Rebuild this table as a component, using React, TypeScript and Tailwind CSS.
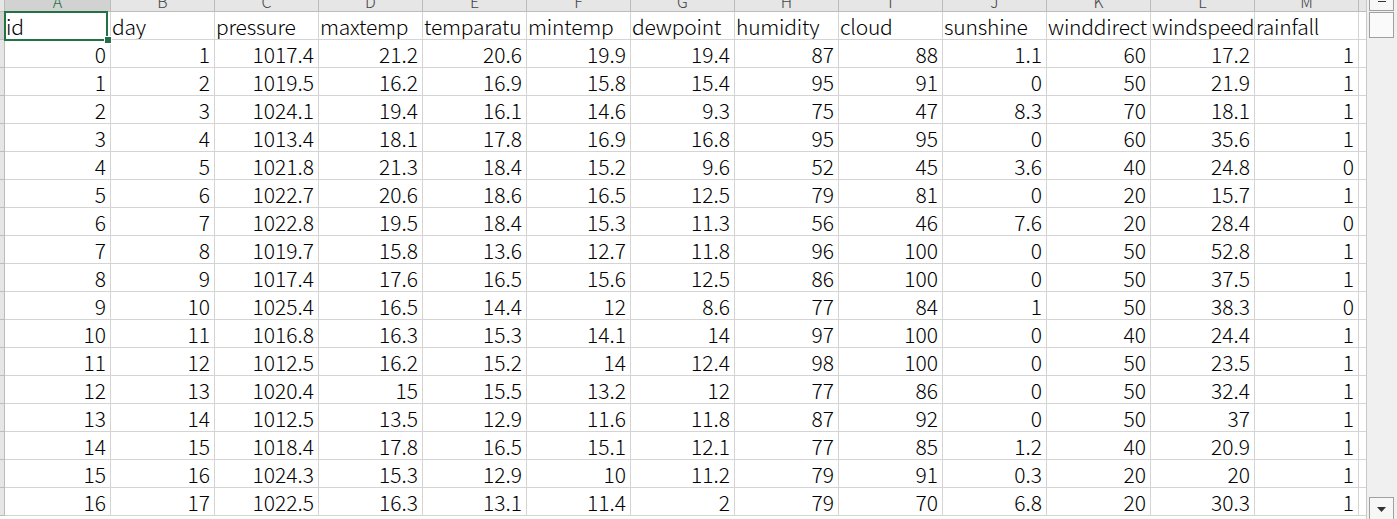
import React from "react";

const headers = ["id","day","pressure","maxtemp","temparatu","mintemp","dewpoint","humidity","cloud","sunshine","winddirect","windspeed","rainfall"];
const letters = ["A","B","C","D","E","F","G","H","I","J","K","L","M"];

const data: (string)[][] = [
  ["0","1","1017.4","21.2","20.6","19.9","19.4","87","88","1.1","60","17.2","1"],
  ["1","2","1019.5","16.2","16.9","15.8","15.4","95","91","0","50","21.9","1"],
  ["2","3","1024.1","19.4","16.1","14.6","9.3","75","47","8.3","70","18.1","1"],
  ["3","4","1013.4","18.1","17.8","16.9","16.8","95","95","0","60","35.6","1"],
  ["4","5","1021.8","21.3","18.4","15.2","9.6","52","45","3.6","40","24.8","0"],
  ["5","6","1022.7","20.6","18.6","16.5","12.5","79","81","0","20","15.7","1"],
  ["6","7","1022.8","19.5","18.4","15.3","11.3","56","46","7.6","20","28.4","0"],
  ["7","8","1019.7","15.8","13.6","12.7","11.8","96","100","0","50","52.8","1"],
  ["8","9","1017.4","17.6","16.5","15.6","12.5","86","100","0","50","37.5","1"],
  ["9","10","1025.4","16.5","14.4","12","8.6","77","84","1","50","38.3","0"],
  ["10","11","1016.8","16.3","15.3","14.1","14","97","100","0","40","24.4","1"],
  ["11","12","1012.5","16.2","15.2","14","12.4","98","100","0","50","23.5","1"],
  ["12","13","1020.4","15","15.5","13.2","12","77","86","0","50","32.4","1"],
  ["13","14","1012.5","13.5","12.9","11.6","11.8","87","92","0","50","37","1"],
  ["14","15","1018.4","17.8","16.5","15.1","12.1","77","85","1.2","40","20.9","1"],
  ["15","16","1024.3","15.3","12.9","10","11.2","79","91","0.3","20","20","1"],
  ["16","17","1022.5","16.3","13.1","11.4","2","79","70","6.8","20","30.3","1"],
];

const font = { fontFamily: '"Noto Sans CJK JP", "Noto Sans", sans-serif' };

function colW(i: number) {
  return i === 0 ? "w-[106px]" : "w-[104px]";
}

export default function App() {
  return (
    <div className="relative flex w-[1397px] h-[519px] overflow-hidden bg-white text-black" style={font}>
      <div className="flex flex-col w-[1366px] shrink-0">
        <div className="flex h-[12px] shrink-0">
          <div className="w-[5px] shrink-0 bg-[#e6e6e6] border-r border-b border-[#bcbcbc]" />
          {letters.map((l, i) => (
            <div
              key={l}
              className={`${i === 0 ? "w-[106px] bg-[#d2d2d2] text-[#217346]" : "w-[104px] bg-[#e6e6e6] text-[#444]"} shrink-0 flex items-end justify-center pb-[2px] overflow-hidden border-r border-b border-[#bcbcbc] text-[16px] leading-none font-light`}
            >
              <span className="leading-none">{l}</span>
            </div>
          ))}
          <div className="w-[7px] shrink-0 bg-[#e6e6e6] border-b border-[#bcbcbc]" />
        </div>
        <Row cells={headers} isHeader selected />
        {data.map((r, i) => (
          <Row key={i} cells={r} />
        ))}
      </div>
      <div className="flex flex-col w-[31px] shrink-0 bg-[#f0f0f0] border-l border-[#c8c8c8] pl-[2px]">
        <div className="w-[25px] h-[11px] border-x border-b border-[#a0a0a0] bg-[#f7f7f7] flex justify-center">
          <div className="w-[8px] h-[1px] bg-[#333] mt-[1px]" />
        </div>
        <div className="w-[25px] h-[26px] border border-[#a0a0a0] bg-[#fafafa] mt-[1px]" />
        <div className="flex-1" />
        <div className="w-[25px] h-[22px] border-x border-t border-[#a0a0a0] bg-[#f7f7f7] flex justify-center pt-[9px]">
          <svg width="9" height="5" viewBox="0 0 9 5">
            <polygon points="0,0 9,0 4.5,5" fill="#333" />
          </svg>
        </div>
      </div>
      <div className="absolute left-[4px] top-[11px] w-[104px] h-[30px] border-2 border-[#217346] pointer-events-none" />
      <div className="absolute left-[104px] top-[36px] w-[8px] h-[8px] bg-[#217346] border border-white" />
    </div>
  );
}

function Row({ cells, isHeader, selected }: { cells: string[]; isHeader?: boolean; selected?: boolean }) {
  return (
    <div className="flex h-[28px] shrink-0">
      <div className={`w-[5px] shrink-0 ${selected ? "bg-[#d2d2d2]" : "bg-[#e6e6e6]"} border-r border-b border-[#bcbcbc]`} />
      {cells.map((c, i) => (
        <div
          key={i}
          className={`${colW(i)} shrink-0 flex items-end overflow-hidden whitespace-nowrap border-r border-b border-[#d4d4d4] pb-[2px] text-[21px] leading-[22px] font-light ${isHeader ? "justify-start pl-[1px] tracking-[-0.2px]" : "justify-end pr-[4px]"}`}
        >
          <span className="leading-[22px]">{c}</span>
        </div>
      ))}
      <div className="w-[7px] shrink-0 border-b border-[#d4d4d4]" />
    </div>
  );
}
